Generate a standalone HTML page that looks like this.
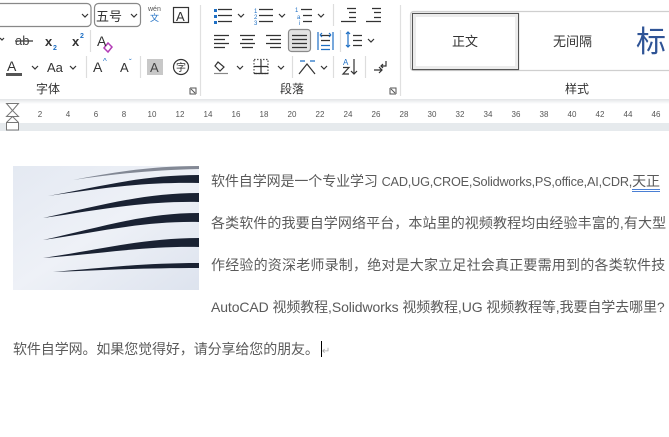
<!DOCTYPE html>
<html><head><meta charset="utf-8">
<style>
*{margin:0;padding:0;box-sizing:border-box}
body{width:669px;height:437px;overflow:hidden;background:#fff;font-family:"Liberation Sans","Noto Sans CJK SC",sans-serif;position:relative}
.a{position:absolute;white-space:nowrap}
.t{font-size:14px;color:#5a5a5a;letter-spacing:-0.1px}
.l{font-size:12.7px;letter-spacing:-0.2px}
</style></head><body>
<svg class="a" style="left:0;top:0" width="669" height="102" viewBox="0 0 669 102">
<g fill="none" stroke="#333" stroke-width="1.2">
<rect x="-10" y="3.5" width="101" height="23" rx="4" stroke="#888"/>
<path d="M82 14l3 3 3-3" stroke="#333"/>
<rect x="94.5" y="3.5" width="46" height="23" rx="4" stroke="#888"/>
<path d="M131 14l3 3 3-3"/>
<rect x="173.5" y="7.5" width="15" height="15"/>
<path d="M0 38l2 2 2-2"/>
<line x1="15" y1="41" x2="33" y2="41"/>
<line x1="90.5" y1="30" x2="90.5" y2="52" stroke="#ddd"/>
<path d="M32 66l3 3 3-3"/>
<path d="M70 66l3 3 3-3"/>
<line x1="86.5" y1="56" x2="86.5" y2="78" stroke="#ddd"/>
<line x1="140.5" y1="56" x2="140.5" y2="78" stroke="#ddd"/>
<circle cx="181" cy="67" r="7.5"/>
<line x1="200.5" y1="5" x2="200.5" y2="96" stroke="#e0e0e0"/>
<line x1="400.5" y1="5" x2="400.5" y2="96" stroke="#e0e0e0"/>
<path d="M190 88h6v6M190 88v6h6M191 89l4 4" stroke="#555" stroke-width="1"/>
<path d="M390 88h6v6M390 88v6h6M391 89l4 4" stroke="#555" stroke-width="1"/>
<path d="M218 9.5h14M218 15.5h14M218 21.5h14"/>
<path d="M238 14l3 3 3-3"/>
<path d="M259 9.5h14M259 15.5h14M259 21.5h14"/>
<path d="M279 14l3 3 3-3"/>
<path d="M301 9.5h11M303 15.5h9M303 21.5h9"/>
<path d="M318 14l3 3 3-3"/>
<line x1="333.5" y1="4" x2="333.5" y2="26" stroke="#ddd"/>
<path d="M347 8.5h9M349 12.5h7M349 17.5h7M341 21.5h15"/>
<path d="M372 8.5h9M374 12.5h7M374 17.5h7M366 21.5h15"/>
<path d="M214 35.5h15M214 39.5h11M214 43.5h15M214 47.5h11"/>
<path d="M240 35.5h15M242 39.5h11M240 43.5h15M242 47.5h11"/>
<path d="M266 35.5h15M270 39.5h11M266 43.5h15M270 47.5h11"/>
<rect x="288.5" y="29.5" width="22" height="22" rx="3" fill="#e3e3e3" stroke="#8a8a8a"/>
<path d="M292 35.5h15M292 39.5h15M292 43.5h15M292 47.5h15"/>
<path d="M318 32v18M333 32v18M321 45.5h9M321 49.5h9" stroke="#1e6fc4"/>
<path d="M321 35.5h9M321 40.5h9" stroke="#333"/>
<path d="M320 35l2-2M320 35l2 2M331 35l-2-2M331 35l-2 2" stroke="#1e6fc4"/>
<line x1="340.5" y1="30" x2="340.5" y2="52" stroke="#ddd"/>
<path d="M353 35.5h9M353 40.5h9M353 45.5h9"/>
<path d="M348 32v15M346 34l2-2 2 2M346 45l2 2 2-2" stroke="#1e6fc4"/>
<path d="M368 39l3 3 3-3"/>
<path d="M214 73.5h14" stroke="#888"/>
<path d="M218 62l6 5-4 4-5-5z"/>
<path d="M237 66l3 3 3-3"/>
<path d="M254 59.5h14v14h-14z" stroke="#555" stroke-dasharray="1.5 1.5"/>
<path d="M254 73.5h14M261 60v14M254 66.5h14" stroke="#333"/>
<path d="M278 66l3 3 3-3"/>
<line x1="292.5" y1="56" x2="292.5" y2="78" stroke="#ddd"/>
<path d="M299 74l8-10 8 10"/>
<path d="M300 61h5M310 61h5" stroke="#1e6fc4"/>
<path d="M321 66l3 3 3-3"/>
<line x1="333.5" y1="56" x2="333.5" y2="78" stroke="#ddd"/>
<path d="M343 67.5h6l-6 6.5h6"/>
<path d="M354 59v15M351 71l3 3 3-3"/>
<line x1="365.5" y1="56" x2="365.5" y2="78" stroke="#ddd"/>
<path d="M374 70h8M379 67l3 3-3 3M386 61v5h-5M383 64l-2 2 2 2"/>
<rect x="410.5" y="11.5" width="270" height="59" rx="3" stroke="#cfcfcf"/>
<rect x="412.5" y="13.5" width="106" height="56" stroke="#555" fill="#fff"/>
<rect x="414.5" y="15.5" width="102" height="52" stroke="#ececec" stroke-width="3"/>
</g>
<rect x="214" y="9" width="3" height="3" fill="#1e6fc4"/><rect x="214" y="15" width="3" height="3" fill="#1e6fc4"/><rect x="214" y="21" width="3" height="3" fill="#1e6fc4"/>
<rect x="6" y="73" width="16" height="3" fill="#555"/>
<rect x="147" y="59" width="16" height="16" fill="#c8c8c8"/>
<path d="M104 48l4-5 4 4-4 5z" fill="none" stroke="#b33cb6" stroke-width="1.5"/>
<g font-family="Liberation Sans,Noto Sans CJK SC,sans-serif" fill="#333">
<text x="96" y="21" font-size="13">五号</text>
<text x="148" y="11" font-size="7" fill="#555">wén</text>
<text x="150" y="21" font-size="9" fill="#1e6fc4">文</text>
<text x="176" y="21" font-size="13">A</text>
<text x="15" y="45" font-size="13" fill="#444">ab</text>
<text x="45" y="46" font-size="13" font-weight="bold">x</text><text x="53" y="50" font-size="7" fill="#1e6fc4" font-weight="bold">2</text>
<text x="72" y="46" font-size="13" font-weight="bold">x</text><text x="80" y="38" font-size="7" fill="#1e6fc4" font-weight="bold">2</text>
<text x="97" y="46" font-size="14">A</text>
<text x="7" y="71" font-size="14">A</text>
<text x="47" y="72" font-size="13">Aa</text>
<text x="93" y="72" font-size="14">A</text><text x="103" y="64" font-size="8" fill="#1e6fc4">^</text>
<text x="120" y="72" font-size="13">A</text><text x="129" y="65" font-size="8" fill="#1e6fc4">ˇ</text>
<text x="150" y="72" font-size="13" fill="#444">A</text>
<text x="176" y="71" font-size="10">字</text>
<text x="36" y="93" font-size="12">字体</text>
<text x="280" y="93" font-size="12">段落</text>
<text x="565" y="93" font-size="12">样式</text>
<text x="452" y="46" font-size="13">正文</text>
<text x="553" y="46" font-size="13">无间隔</text>
<text x="636" y="52" font-size="30" fill="#2f5496">标</text>
<text x="254" y="13" font-size="6" fill="#1e6fc4">1</text><text x="254" y="19" font-size="6" fill="#1e6fc4">2</text><text x="254" y="25" font-size="6" fill="#1e6fc4">3</text>
<text x="295" y="12" font-size="6" fill="#1e6fc4">1</text><text x="297" y="19" font-size="6" fill="#1e6fc4">a</text><text x="299" y="25" font-size="6" fill="#1e6fc4">i</text>
<text x="343" y="65" font-size="8" fill="#1e6fc4">A</text>
</g>
</svg>
<div class="a" style="left:0;top:99px;width:669px;height:5px;background:linear-gradient(#e2e4e6,#fff)"></div>
<div class="a" style="left:0;top:123px;width:669px;height:8px;background:#e6eaed"></div>
<svg class="a" style="left:0;top:102px" width="669" height="30">
<path d="M6.5 1.5h12l-6 7 6 6h-12l6-6z" fill="#fff" stroke="#777"/>
<path d="M6.5 20.5l6-6 6 6v7.5h-12z" fill="#fff" stroke="#777"/>
<path d="M6.5 20.5h12" stroke="#777"/>
<g font-family="Liberation Sans,sans-serif" font-size="8" fill="#555" text-anchor="middle">
<text x="40" y="15">2</text><text x="68" y="15">4</text><text x="96" y="15">6</text><text x="124" y="15">8</text><text x="152" y="15">10</text><text x="180" y="15">12</text><text x="208" y="15">14</text><text x="236" y="15">16</text><text x="264" y="15">18</text><text x="292" y="15">20</text><text x="320" y="15">22</text><text x="348" y="15">24</text><text x="376" y="15">26</text><text x="404" y="15">28</text><text x="432" y="15">30</text><text x="460" y="15">32</text><text x="488" y="15">34</text><text x="516" y="15">36</text><text x="544" y="15">38</text><text x="572" y="15">40</text><text x="600" y="15">42</text><text x="628" y="15">44</text><text x="656" y="15">46</text>
</g></svg>
<svg class="a" style="left:13px;top:166px" width="186" height="124" viewBox="0 0 186 124">
<defs><linearGradient id="g" x1="0" y1="0" x2="1" y2="1"><stop offset="0" stop-color="#e4e9f2"/><stop offset=".5" stop-color="#eef1f7"/><stop offset="1" stop-color="#dde3ee"/></linearGradient></defs>
<rect width="186" height="124" fill="url(#g)"/>
<g fill="#1a2233">
<path d="M60 14C100 6 140 0 186 0v3C140 4 100 8 60 14z" opacity=".5"/>
<path d="M35 30C90 20 130 9 186 9v8C130 16 90 22 35 30z"/>
<path d="M30 52C85 40 130 27 186 27v9C130 35 85 44 30 52z"/>
<path d="M30 74C85 62 130 47 186 47v9C130 55 85 66 30 74z"/>
<path d="M30 92C85 84 130 72 186 72v9C130 80 85 88 30 92z"/>
<path d="M40 106C90 102 130 97 186 97v5C130 102 90 104 40 106z"/>
</g></svg>
<div class="a t" style="left:211px;top:171px">软件自学网是一个专业学习 <span class="l">CAD,UG,CROE,Solidworks,PS,office,AI,CDR,</span><span style="border-bottom:3px double #4a7fd4">天正</span></div>
<div class="a t" style="left:211px;top:213px;letter-spacing:0.1px">各类软件的我要自学网络平台，本站里的视频教程均由经验丰富的,有大型</div>
<div class="a t" style="left:211px;top:255px;letter-spacing:0.2px">作经验的资深老师录制，绝对是大家立足社会真正要需用到的各类软件技</div>
<div class="a t" style="left:211px;top:297px">AutoCAD 视频教程,Solidworks 视频教程,UG 视频教程等,我要自学去哪里?</div>
<div class="a t" style="left:13px;top:339px">软件自学网。如果您觉得好，请分享给您的朋友。<span style="display:inline-block;width:1px;height:16px;background:#000;vertical-align:-3px;margin-left:2px"></span><span style="color:#aaa;font-size:10px">↵</span></div>
</body></html>
